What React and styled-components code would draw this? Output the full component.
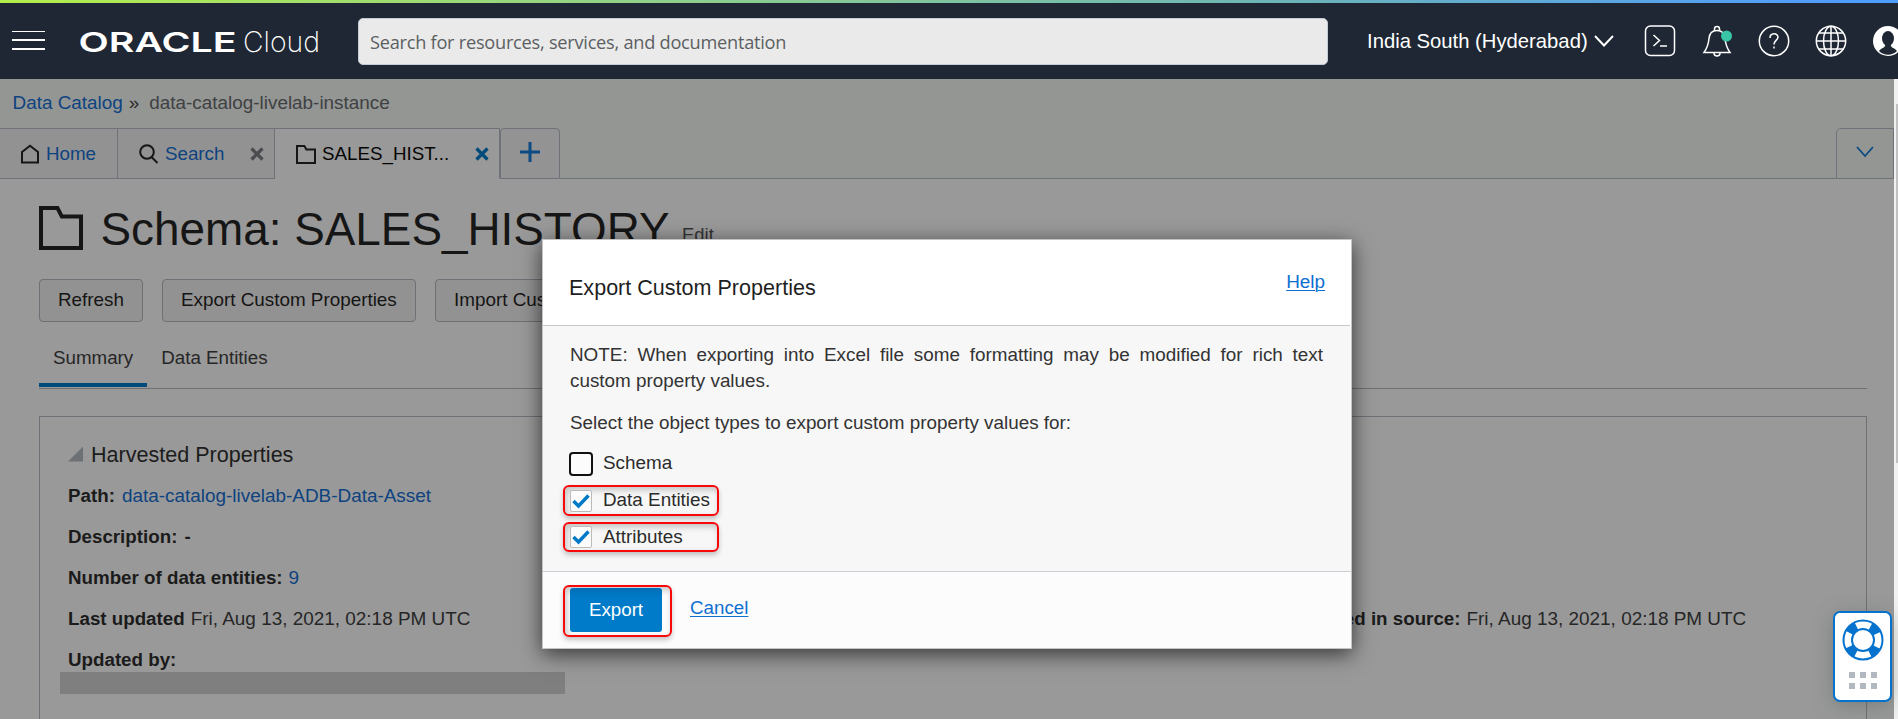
import React from "react";
import styled, { createGlobalStyle, css } from "styled-components";

const Global = createGlobalStyle`
  *, *::before, *::after { box-sizing: border-box; }
  html, body { margin: 0; padding: 0; background: #999; overflow: hidden; }
  body { font-family: "Liberation Sans", Arial, sans-serif; font-size: 18.75px; color: #1f1f1f; }
  p, h1, h2 { margin: 0; font-weight: 400; }
`;

const Shell = styled.div`
  width: 1898px;
  height: 719px;
  display: flex;
  flex-direction: column;
  overflow: hidden;
  position: relative;
`;

const Accent = styled.div`
  flex: none;
  height: 3px;
  background: linear-gradient(90deg, #b4ee4b 0%, #8fcf8b 35%, #6cb4b8 68%, #4f9cff 97%);
`;

const Header = styled.header`
  flex: none;
  height: 76px;
  background: #1e2733;
  display: flex;
  align-items: center;
  padding-left: 12px;
  overflow: hidden;
`;

const MenuButton = styled.div`
  flex: none;
  width: 33px;
  height: 19px;
  margin-bottom: 2px;
  border-top: 1px solid #fff;
  border-bottom: 2px solid #fff;
  display: flex;
  align-items: center;
  &::before { content: ""; width: 100%; height: 2px; background: #fff; }
`;

const Logo = styled.svg`
  flex: none;
  margin-left: 34px;
  width: 242px;
  height: 40px;
  fill: #fff;
`;

const SearchBox = styled.div`
  flex: none;
  margin-left: 37px;
  width: 970px;
  height: 47px;
  background: #eaeaea;
  border: 1px solid #c3cbd6;
  border-radius: 5px;
  padding: 2px 0 0 11px;
  display: flex;
  align-items: center;
  font-family: "Open Sans", "Noto Sans", sans-serif;
  font-size: 18.2px;
  letter-spacing: -0.25px;
  color: #5c5f62;
  white-space: nowrap;
`;

const Region = styled.div`
  flex: none;
  margin-left: 39px;
  width: 247px;
  display: flex;
  align-items: center;
  gap: 6px;
  color: #fff;
  font-size: 20.25px;
  white-space: nowrap;
`;

const HeaderIcons = styled.div`
  flex: none;
  display: flex;
  align-items: center;
  gap: 25px;
  margin-left: 30px;
`;

const HeaderIcon = styled.svg`
  flex: none;
  width: 32px;
  height: 34px;
  fill: none;
  stroke: #fff;
  stroke-width: 1.5;
`;

const Body = styled.div`
  flex: 1;
  min-height: 0;
  display: flex;
`;

const Content = styled.main`
  width: 1894px;
  display: flex;
  flex-direction: column;
  background: #999;
  overflow: hidden;
`;

const ScrollTrack = styled.div`
  width: 4px;
  background: #f1f1f1;
  padding: 25px 0 0 2px;
`;

const ScrollThumb = styled.div`
  width: 2px;
  height: 359px;
  background: #c1c1c1;
`;

const TopStrip = styled.div`
  flex: none;
  height: 100px;
  background: #949694;
  display: flex;
  flex-direction: column;
`;

const Breadcrumb = styled.nav`
  height: 49px;
  padding: 13px 0 0 12.5px;
  line-height: 22px;
  display: flex;
  font-size: 18.9px;
  white-space: nowrap;
`;

const Crumb = styled.span`
  color: ${(p) => (p.$link ? "#0d4380" : "#3f4143")};
`;

const Separator = styled.span`
  margin: 0 10px 0 6px;
  color: #2a2a2a;
`;

const TabBar = styled.div`
  height: 51px;
  display: flex;
  white-space: nowrap;
`;

const Tab = styled.div`
  width: ${(p) => p.$w}px;
  border-top: 1px solid #6f7278;
  border-right: 1px solid #6f7278;
  border-bottom: 1px solid ${(p) => (p.$active ? "#999" : "#6f7278")};
  background: ${(p) => (p.$active ? "#999" : "#929292")};
  color: ${(p) => (p.$active ? "#050505" : "#0d4380")};
  display: flex;
  align-items: center;
  padding: ${(p) => (p.$active ? "1px" : "0")} 10px 0 ${(p) => p.$pad}px;
  gap: 6px;
  svg { flex: none; }
`;

const TabClose = styled.svg`
  margin-left: auto;
  width: 14px;
  height: 14px;
  stroke: ${(p) => p.$color};
  stroke-width: 3.2;
`;

const AddTab = styled.div`
  width: 60px;
  border: 1px solid #6f7278;
  border-top-right-radius: 4px;
  border-top-left-radius: 4px;
  padding-bottom: 3px;
  background: #929392;
  display: flex;
  align-items: center;
  justify-content: center;
`;

const TabFill = styled.div`
  flex: 1;
  border-bottom: 1px solid #6f7278;
`;

const TabMenu = styled.div`
  width: 58px;
  border: 1px solid #6f7278;
  border-top-left-radius: 5px;
  display: flex;
  align-items: center;
  justify-content: center;
  padding-bottom: 4px;
`;

const Page = styled.div`
  width: 1867px;
  padding-left: 39px;
  display: flex;
  flex-direction: column;
`;

const TitleRow = styled.div`
  height: 100px;
  display: flex;
  white-space: nowrap;
  svg { flex: none; margin-top: 27px; }
`;

const Title = styled.h1`
  margin-left: 17.5px;
  padding-top: 24px;
  font-size: 45.85px;
  line-height: 52px;
  color: #161616;
`;

const Edit = styled.span`
  margin: 45px 0 0 12.5px;
  line-height: 22px;
  font-size: 18.4px;
  color: #333;
`;

const Actions = styled.div`
  display: flex;
  gap: 19px;
`;

const ActionButton = styled.div`
  height: 43px;
  width: ${(p) => p.$w}px;
  border: 1px solid #6d7075;
  border-radius: 4px;
  background: #929292;
  color: #151515;
  padding: 0 0 2px 18px;
  display: flex;
  align-items: center;
  font-size: 18.85px;
  white-space: nowrap;
`;

const SubTabs = styled.div`
  height: 67px;
  border-bottom: 1px solid #6d7075;
  display: flex;
  padding-bottom: 1px;
`;

const SubTab = styled.div`
  padding: 25px 14px 0 14px;
  line-height: 22px;
  color: #262626;
  ${(p) => p.$active && css`border-bottom: 4px solid #004b7a;`}
`;

const Panel = styled.section`
  margin-top: 27px;
  height: 340px;
  border: 1px solid #6d7075;
  padding: 25px 0 0 28px;
`;

const PanelTitle = styled.h2`
  display: flex;
  align-items: center;
  gap: 8px;
  height: 35px;
  font-size: 21.55px;
  line-height: 24px;
  padding-bottom: 9px;
  color: #1c1c1c;
  &::before {
    content: "";
    width: 15px;
    height: 15px;
    margin-bottom: 2px;
    background: #6d7075;
    clip-path: polygon(100% 0, 100% 100%, 0 100%);
  }
`;

const Columns = styled.div`
  display: grid;
  grid-template-columns: 1181px 1fr;
`;

const Facts = styled.div`
  padding-top: ${(p) => p.$top || 0}px;
`;

const Fact = styled.div`
  height: 41px;
  line-height: 38px;
  display: flex;
  gap: ${(p) => p.$gap || 6}px;
  white-space: nowrap;
  font-size: 18.93px;
  color: #262626;
  b { color: #1b1b1b; font-size: 18.75px; }
  a { color: #0d4380; }
`;

const Redaction = styled.div`
  width: 505px;
  height: 22px;
  margin: -10px 0 0 -8px;
  background: #7f7f7f;
`;

const Dialog = styled.div`
  position: absolute;
  left: 542px;
  top: 239px;
  width: 810px;
  height: 410px;
  border: 1px solid #c4c4c4;
  background: #fff;
  box-shadow: 0 5px 20px rgba(0, 0, 0, 0.65);
  display: flex;
  flex-direction: column;
`;

const DialogHead = styled.div`
  height: 86px;
  margin-right: 1px;
  border-bottom: 1px solid #c8c8c8;
  display: flex;
  justify-content: space-between;
  padding: 35px 25px 0 26px;
`;

const DialogTitle = styled.h2`
  font-size: 21.55px;
  line-height: 26px;
  color: #1f1f1f;
`;

const Link = styled.a`
  color: #0f6fd1;
  text-decoration: underline;
  text-decoration-thickness: 1px;
  text-underline-offset: 2px;
  line-height: 22px;
`;

const HelpLink = styled(Link)`
  margin-top: -4px;
  font-size: 18.9px;
`;

const DialogBody = styled.div`
  height: 246px;
  background: #f7f7f7;
  border-bottom: 1px solid #d2ccd6;
  padding: 16px 28px 0 27px;
  font-size: 18.87px;
  line-height: 26px;
  color: #333;
`;

const Note = styled.p`
  width: 753px;
  text-align: justify;
`;

const Prompt = styled.p`
  margin-top: 16px;
  white-space: nowrap;
`;

const Options = styled.div`
  display: flex;
  flex-direction: column;
  gap: 6px;
  margin: 12px 0 0 -7px;
`;

const marked = css`
  border: 2px solid #f8070b;
  box-shadow: 0 3px 5px rgba(0, 0, 0, 0.22), inset 2px 3px 6px rgba(0, 0, 0, 0.22);
`;

const Option = styled.label`
  width: 156px;
  height: ${(p) => p.$h || 31}px;
  border-radius: 6px;
  border: 2px solid transparent;
  display: flex;
  align-items: center;
  padding-left: 4px;
  line-height: 22px;
  color: #2b2b2b;
  white-space: nowrap;
  ${(p) => p.$marked && marked}
`;

const OptionText = styled.span`
  padding-bottom: 1px;
`;

const Check = styled.span`
  flex: none;
  width: ${(p) => (p.$focus ? 24 : 22)}px;
  height: ${(p) => (p.$focus ? 24 : 22)}px;
  margin: 0 ${(p) => (p.$focus ? 10 : 11)}px 0 ${(p) => (p.$focus ? 0 : 1)}px;
  border: ${(p) => (p.$focus ? "2px solid #111" : "1px solid #bbb")};
  border-radius: ${(p) => (p.$focus ? 4 : 2)}px;
  background: #fcfcfc;
  display: flex;
  align-items: center;
  justify-content: center;
`;

const DialogFoot = styled.div`
  flex: 1;
  background: #fcfcfc;
  display: flex;
  align-items: flex-start;
  padding: 13px 0 0 20px;
`;

const ExportFrame = styled.div`
  width: 109px;
  height: 52px;
  border-radius: 6px;
  padding: 1px 0 0 5px;
  ${marked}
`;

const ExportButton = styled.div`
  width: 92px;
  height: 44px;
  border-radius: 3px;
  background: linear-gradient(#0070b8, #007bc9 25%);
  color: #fff;
  display: flex;
  align-items: center;
  justify-content: center;
`;

const CancelLink = styled(Link)`
  margin: 12px 0 0 18px;
`;

const Support = styled.div`
  position: absolute;
  left: 1833px;
  top: 611px;
  width: 59px;
  height: 91px;
  border: 2px solid #0572ce;
  border-radius: 7px;
  background: #fff;
  box-shadow: 0 4px 20px rgba(70, 80, 80, 0.35);
  display: flex;
  flex-direction: column;
  align-items: center;
  padding: 6px 0 0 0;
`;

const Grip = styled.div`
  margin-top: 11px;
  display: grid;
  grid-template-columns: repeat(3, 6px);
  gap: 5px;
  i { height: 6px; background: #b2b8c0; }
`;

const Folder = ({ size, height, stroke }) => (
  <svg width={size} height={height} viewBox={`0 0 ${size} ${height}`} fill="none" stroke="#161616" strokeWidth={stroke}>
    <path
      d={`M${stroke / 2} ${stroke / 2}H${size * 0.42}L${size * 0.52} ${height * 0.24}H${size - stroke / 2}V${height - stroke / 2}H${stroke / 2}Z`}
    />
  </svg>
);

const CloseIcon = ({ color }) => (
  <TabClose $color={color} viewBox="0 0 14 14">
    <path d="M1.5 1.5L12.5 12.5M12.5 1.5L1.5 12.5" />
  </TabClose>
);

const Tick = () => (
  <svg width="18" height="16" viewBox="0 0 18 16" fill="none" stroke="#0079c7" strokeWidth="3.4">
    <path d="M1.5 8L6.5 13L16.5 2.5" />
  </svg>
);

const Lifebuoy = () => (
  <svg width="42" height="42" viewBox="0 0 42 42" fill="none" stroke="#0572ce">
    <circle cx="21" cy="21" r="15.2" strokeWidth="9" strokeDasharray="9.5 14.375" strokeDashoffset="-7.2" />
    <circle cx="21" cy="21" r="19.5" strokeWidth="2" />
    <circle cx="21" cy="21" r="11" strokeWidth="2" />
  </svg>
);

export default function App() {
  return (
    <Shell>
      <Global />
      <Accent />
      <Header>
        <MenuButton />
        <Logo viewBox="0 0 242 40">
          <text x="-0.5" y="30.8" fontFamily="Inter" fontWeight="600" fontSize="27.5" textLength="158" lengthAdjust="spacingAndGlyphs">ORACLE</text>
          <text x="164" y="30.8" fontFamily="Inter" fontWeight="200" fontSize="28.5" textLength="77" lengthAdjust="spacingAndGlyphs">Cloud</text>
        </Logo>
        <SearchBox>Search for resources, services, and documentation</SearchBox>
        <Region>
          India South (Hyderabad)
          <svg width="20" height="12" viewBox="0 0 20 12" fill="none" stroke="#fff" strokeWidth="2">
            <path d="M1 1L10 10.5L19 1" />
          </svg>
        </Region>
        <HeaderIcons>
          <HeaderIcon viewBox="0 0 32 34">
            <rect x="1.5" y="2" width="29" height="29.5" rx="5" />
            <path d="M9.500 11L15.500 16.500L9.500 22M16 22H23" />
          </HeaderIcon>
          <HeaderIcon viewBox="0 0 32 34">
            <path d="M3 28.500C6.500 23.500 7.500 20 8 14.500C8.500 9 11 6.500 16 6.500C21 6.500 23.500 9 24 14.500C24.500 20 25.500 23.500 29 28.500Z" />
            <path d="M13.500 6.500V5A2.500 2.500 0 0 1 18.500 5V6.500M13 29A3 3 0 0 0 19 29" />
            <circle cx="25.500" cy="12" r="5.500" fill="#3ac6a6" stroke="none" />
          </HeaderIcon>
          <HeaderIcon viewBox="0 0 32 34">
            <circle cx="16" cy="17" r="14.700" />
            <path d="M12 14C12 8.500 20 8.500 20 13.300C20 16 16 16.500 16 20.500M16 22.500V24.500" />
          </HeaderIcon>
          <HeaderIcon viewBox="0 0 32 34">
            <circle cx="16" cy="17" r="14.700" />
            <ellipse cx="16" cy="17" rx="7.500" ry="14.700" />
            <path d="M16 2.300V31.700M1.300 17H30.700M4 9H28M4 25H28" />
          </HeaderIcon>
          <HeaderIcon viewBox="0 0 32 34">
            <circle cx="16" cy="17" r="15" fill="#fff" stroke="none" />
            <ellipse cx="16" cy="14.500" rx="6" ry="7.500" fill="#1e2733" stroke="none" />
            <path d="M7 27C9 23.500 13 25 13.500 20H18.500C19 25 23 23.500 25 27C20 32 12 32 7 27Z" fill="#1e2733" stroke="none" />
          </HeaderIcon>
        </HeaderIcons>
      </Header>
      <Body>
        <Content>
          <TopStrip>
            <Breadcrumb>
              <Crumb $link>Data Catalog</Crumb>
              <Separator>»</Separator>
              <Crumb>data-catalog-livelab-instance</Crumb>
            </Breadcrumb>
            <TabBar>
              <Tab $w={118} $pad={20}>
                <svg width="20" height="20" viewBox="0 0 20 20" fill="none" stroke="#161616" strokeWidth="2">
                  <path d="M2 8L10 1.800L18 8V18.500H2Z" />
                </svg>
                Home
              </Tab>
              <Tab $w={157} $pad={21}>
                <svg width="20" height="20" viewBox="0 0 20 20" fill="none" stroke="#161616" strokeWidth="2">
                  <circle cx="8" cy="8" r="6.800" />
                  <path d="M12.500 13L18.500 19" />
                </svg>
                Search
                <CloseIcon color="#4a4c4f" />
              </Tab>
              <Tab $w={225} $pad={21} $active>
                <Folder size={20} height={19} stroke={2} />
                SALES_HIST...
                <CloseIcon color="#004b7a" />
              </Tab>
              <AddTab>
                <svg width="20" height="20" viewBox="0 0 20 20" stroke="#0b4a82" strokeWidth="3">
                  <path d="M0 10H20M10 0V20" />
                </svg>
              </AddTab>
              <TabFill />
              <TabMenu>
                <svg width="18" height="12" viewBox="0 0 18 12" fill="none" stroke="#0b4a82" strokeWidth="1.800">
                  <path d="M1 1L9 10L17 1" />
                </svg>
              </TabMenu>
            </TabBar>
          </TopStrip>
          <Page>
            <TitleRow>
              <Folder size={44} height={44} stroke={4} />
              <Title>Schema: SALES_HISTORY</Title>
              <Edit>Edit</Edit>
            </TitleRow>
            <Actions>
              <ActionButton $w={104}>Refresh</ActionButton>
              <ActionButton $w={254}>Export Custom Properties</ActionButton>
              <ActionButton $w={254}>Import Custom Properties</ActionButton>
            </Actions>
            <SubTabs>
              <SubTab $active>Summary</SubTab>
              <SubTab>Data Entities</SubTab>
            </SubTabs>
            <Panel>
              <PanelTitle>Harvested Properties</PanelTitle>
              <Columns>
                <Facts>
                  <Fact $gap={7}><b>Path:</b><a>data-catalog-livelab-ADB-Data-Asset</a></Fact>
                  <Fact $gap={7}><b>Description:</b><b>-</b></Fact>
                  <Fact><b>Number of data entities:</b><a>9</a></Fact>
                  <Fact><b>Last updated</b><span>Fri, Aug 13, 2021, 02:18 PM UTC</span></Fact>
                  <Fact><b>Updated by:</b></Fact>
                  <Redaction />
                </Facts>
                <Facts $top={123}>
                  <Fact><b>Last updated in source:</b><span>Fri, Aug 13, 2021, 02:18 PM UTC</span></Fact>
                </Facts>
              </Columns>
            </Panel>
          </Page>
        </Content>
        <ScrollTrack><ScrollThumb /></ScrollTrack>
      </Body>
      <Dialog>
        <DialogHead>
          <DialogTitle>Export Custom Properties</DialogTitle>
          <HelpLink>Help</HelpLink>
        </DialogHead>
        <DialogBody>
          <Note>NOTE: When exporting into Excel file some formatting may be modified for rich text custom property values.</Note>
          <Prompt>Select the object types to export custom property values for:</Prompt>
          <Options>
            <Option><Check $focus /><OptionText>Schema</OptionText></Option>
            <Option $marked><Check><Tick /></Check><OptionText>Data Entities</OptionText></Option>
            <Option $marked $h={30}><Check><Tick /></Check><OptionText>Attributes</OptionText></Option>
          </Options>
        </DialogBody>
        <DialogFoot>
          <ExportFrame><ExportButton>Export</ExportButton></ExportFrame>
          <CancelLink>Cancel</CancelLink>
        </DialogFoot>
      </Dialog>
      <Support>
        <Lifebuoy />
        <Grip><i /><i /><i /><i /><i /><i /></Grip>
      </Support>
    </Shell>
  );
}
